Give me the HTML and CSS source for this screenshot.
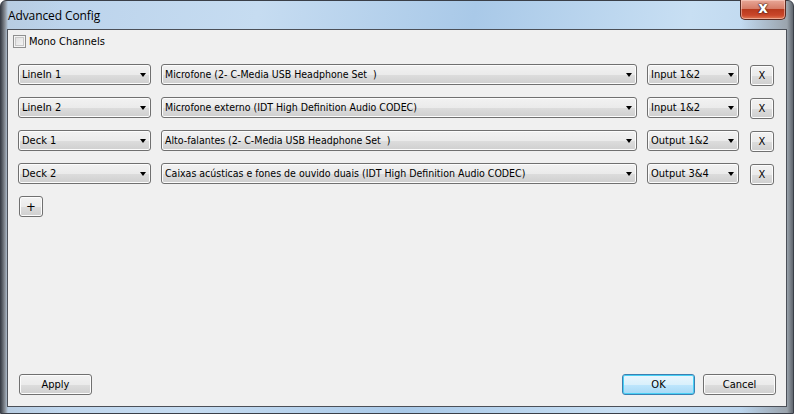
FILE: index.html
```html
<!DOCTYPE html>
<html>
<head>
<meta charset="utf-8">
<link rel="stylesheet" href="styles.css">
</head>
<body>
<div class="window">
  <div class="titlebar">
    <span class="title">Advanced Config</span>
    <div class="close"><span class="close-x">x</span></div>
  </div>
  <div class="client">
    <label class="check"><span class="box"></span><span>Mono Channels</span></label>
    <div class="rows">
      <div class="row">
        <div class="combo c1"><span>LineIn 1</span><i class="arrow"></i></div>
        <div class="combo c2"><span>Microfone (2- C-Media USB Headphone Set  )</span><i class="arrow"></i></div>
        <div class="combo c3"><span>Input 1&amp;2</span><i class="arrow"></i></div>
        <div class="btn xbtn">X</div>
      </div>
      <div class="row">
        <div class="combo c1"><span>LineIn 2</span><i class="arrow"></i></div>
        <div class="combo c2"><span>Microfone externo (IDT High Definition Audio CODEC)</span><i class="arrow"></i></div>
        <div class="combo c3"><span>Input 1&amp;2</span><i class="arrow"></i></div>
        <div class="btn xbtn">X</div>
      </div>
      <div class="row">
        <div class="combo c1"><span>Deck 1</span><i class="arrow"></i></div>
        <div class="combo c2"><span>Alto-falantes (2- C-Media USB Headphone Set  )</span><i class="arrow"></i></div>
        <div class="combo c3"><span>Output 1&amp;2</span><i class="arrow"></i></div>
        <div class="btn xbtn">X</div>
      </div>
      <div class="row">
        <div class="combo c1"><span>Deck 2</span><i class="arrow"></i></div>
        <div class="combo c2"><span>Caixas acústicas e fones de ouvido duais (IDT High Definition Audio CODEC)</span><i class="arrow"></i></div>
        <div class="combo c3"><span>Output 3&amp;4</span><i class="arrow"></i></div>
        <div class="btn xbtn">X</div>
      </div>
    </div>
    <div class="btn plus">+</div>
    <div class="footer">
      <div class="btn wide">Apply</div>
      <div class="spacer"></div>
      <div class="btn wide default">OK</div>
      <div class="btn wide">Cancel</div>
    </div>
  </div>
</div>
</body>
</html>
```
FILE: styles.css
```css
* { box-sizing: border-box; }
html, body { margin: 0; padding: 0; }
body {
  width: 794px; height: 414px; overflow: hidden;
  font-family: "DejaVu Sans Condensed", "DejaVu Sans", sans-serif;
  font-stretch: condensed;
  font-size: 10.5px; color: #000;
  background: #fff;
}
.window {
  width: 794px; height: 414px;
  display: flex; flex-direction: column;
  padding: 0 6px 6px 6px;
  border: 1px solid #3a3f48;
  border-radius: 6px 6px 0 0;
  background:
    linear-gradient(to right, #40454d 0px, #8a9098 4px, #b8cde2 7px, rgba(184,205,226,0) 60px),
    linear-gradient(to right, rgba(0,0,0,0) 740px, #9ba4ad 786px, #60666e 792px),
    linear-gradient(100deg, #b9d1ea 0%, #c6dcf1 30%, #a9c9e8 55%, #c8dff3 80%, #b5d0ea 100%);
}
.titlebar {
  height: 28px; flex: none;
  display: flex; align-items: flex-start;
  position: relative;
}
.title {
  font-family: "Open Sans", "Noto Sans", sans-serif;
  font-stretch: normal;
  font-size: 12px; color: #000;
  margin-top: 6px; margin-left: 1px;
  letter-spacing: -0.1px;
}
.close {
  position: absolute; right: 1px; top: -1px;
  width: 46px; height: 20px;
  border: 1px solid #5a2a22;
  border-top: none;
  border-radius: 0 0 5px 5px;
  background: linear-gradient(#e8a797 0%, #d67d68 45%, #b83a1e 50%, #c9462a 80%, #e07a55 100%);
  box-shadow: inset 0 0 0 1px rgba(255,220,210,0.5);
  display: flex; align-items: center; justify-content: center;
}
.close-x {
  font-family: "DejaVu Sans", sans-serif; font-weight: bold;
  font-stretch: normal;
  font-size: 15px; line-height: 15px; color: #fff;
  margin-top: -3px;
  text-shadow: 0 0 1px #3a1a14, 0 0 1px #3a1a14, 0 0 2px #3a1a14;
}
.client {
  flex: 1;
  border: 1px solid #4c5058;
  background: #f0f0f0;
  display: flex; flex-direction: column;
  padding: 0 10px 11px 10px;
}
.check {
  display: flex; align-items: center;
  margin: 5px 0 0 -5px; height: 13px;
  font-size: 11px;
}
.box {
  width: 13px; height: 13px; margin-right: 3px;
  border: 1px solid #8e8f8f;
  background: linear-gradient(135deg, #dcdcdc, #f8f8f8);
  box-shadow: inset 0 0 0 1px #f4f4f4, inset 0 0 0 2px #c8c8c8;
}
.rows {
  display: flex; flex-direction: column; gap: 12px;
  margin-top: 16px;
}
.row { display: flex; align-items: center; height: 21px; }
.combo {
  height: 21px;
  border: 1px solid #707070; border-radius: 3px;
  background: linear-gradient(#f2f2f2 0%, #ebebeb 50%, #dddddd 51%, #cfcfcf 100%);
  box-shadow: inset 0 0 0 1px #fcfcfc;
  display: flex; align-items: center; justify-content: space-between;
  padding: 0 3px 0 3px;
  white-space: pre; overflow: hidden;
}
.combo span { line-height: 19px; font-size: 11px; }
.c1 { width: 133px; }
.c2 { width: 476px; margin-left: 10px; }
.c2 span { font-size: 10.5px; }
.c3 { width: 92px; margin-left: 10px; }
.arrow {
  width: 0; height: 0; flex: none;
  border-left: 3.5px solid transparent;
  border-right: 3.5px solid transparent;
  border-top: 4px solid #000;
  margin-right: 1px;
}
.btn {
  border: 1px solid #707070; border-radius: 3px;
  background: linear-gradient(#f2f2f2 0%, #ebebeb 50%, #dddddd 51%, #cfcfcf 100%);
  box-shadow: inset 0 0 0 1px #fcfcfc;
  display: flex; align-items: center; justify-content: center;
  height: 21px; font-size: 11px;
}
.xbtn { width: 24px; margin-left: 11px; margin-top: 2px; }
.plus { width: 24px; margin-top: 12px; margin-left: 1px; font-size: 13px; }
.footer { margin-top: auto; display: flex; gap: 8px; padding-left: 1px; }
.spacer { flex: 1; }
.wide { width: 73px; height: 21px; }
.default {
  border-color: #3c7fb1;
  background: linear-gradient(#eaf6fd 0%, #d9f0fc 50%, #bee6fd 51%, #a7d9f5 100%);
  box-shadow: inset 0 0 0 1px #48d0f5;
}
```
